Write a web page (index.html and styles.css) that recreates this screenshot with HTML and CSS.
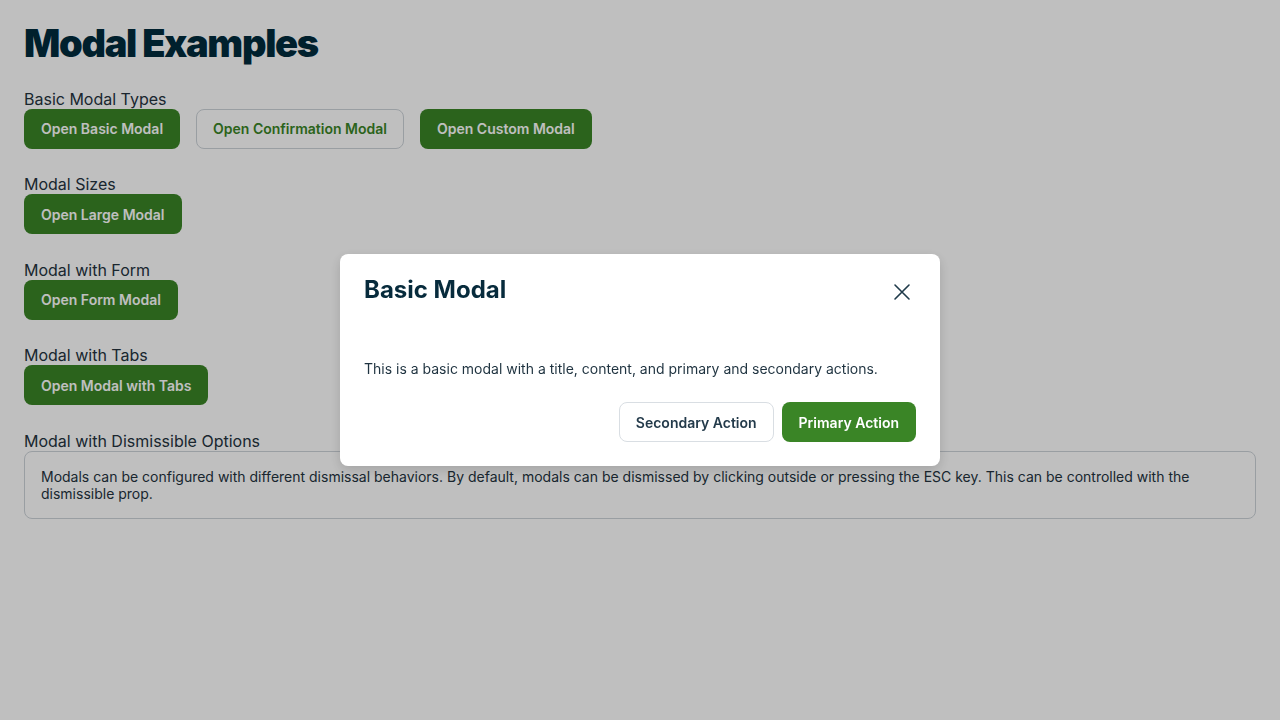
FILE: index.html
```html
<!DOCTYPE html>
<html lang="en">
<head>
<meta charset="utf-8">
<title>Modal Examples</title>
<link rel="stylesheet" href="styles.css">
</head>
<body>
<main class="page">
  <h1 class="page-title">Modal Examples</h1>

  <section class="section">
    <div class="section-label">Basic Modal Types</div>
    <div class="btn-row">
      <button class="btn btn-primary">Open Basic Modal</button>
      <button class="btn btn-outline">Open Confirmation Modal</button>
      <button class="btn btn-primary">Open Custom Modal</button>
    </div>
  </section>

  <section class="section">
    <div class="section-label">Modal Sizes</div>
    <div class="btn-row">
      <button class="btn btn-primary">Open Large Modal</button>
    </div>
  </section>

  <section class="section">
    <div class="section-label">Modal with Form</div>
    <div class="btn-row">
      <button class="btn btn-primary">Open Form Modal</button>
    </div>
  </section>

  <section class="section">
    <div class="section-label">Modal with Tabs</div>
    <div class="btn-row">
      <button class="btn btn-primary">Open Modal with Tabs</button>
    </div>
  </section>

  <section class="section">
    <div class="section-label">Modal with Dismissible Options</div>
    <div class="info-box">Modals can be configured with different dismissal behaviors. By default, modals can be dismissed by clicking outside or pressing the ESC key. This can be controlled with the dismissible prop.</div>
  </section>
</main>

<div class="overlay">
  <div class="modal" role="dialog" aria-labelledby="modal-title">
    <div class="modal-header">
      <h2 class="modal-title" id="modal-title">Basic Modal</h2>
      <button class="modal-close" aria-label="Close">
        <svg width="20" height="20" viewBox="0 0 20 20" fill="none" stroke="currentColor" stroke-width="1.6" stroke-linecap="round"><path d="M3 3L17 17M17 3L3 17"/></svg>
      </button>
    </div>
    <div class="modal-body">This is a basic modal with a title, content, and primary and secondary actions.</div>
    <div class="modal-footer">
      <button class="btn btn-secondary">Secondary Action</button>
      <button class="btn btn-modal-primary">Primary Action</button>
    </div>
  </div>
</div>
</body>
</html>
```

FILE: styles.css
```css
* { box-sizing: border-box; }

html, body {
  margin: 0;
  padding: 0;
  background: #ffffff;
  font-family: Inter, "Noto Sans", "Liberation Sans", sans-serif;
  color: #1f3340;
}

.page {
  padding: 24px;
}

.page-title {
  margin: 0 0 26.6px 0;
  font-size: 38px;
  font-weight: 900;
  letter-spacing: -1.3px;
  line-height: 38px;
  color: #012b3c;
}

.section {
  margin-bottom: 25.6px;
}

.section-label {
  font-size: 16px;
  line-height: normal;
  color: #24333e;
}

.btn-row {
  display: flex;
  gap: 16px;
}

.btn {
  height: 40px;
  padding: 0 16px;
  border-radius: 8px;
  font-family: inherit;
  font-size: 14px;
  font-weight: 600;
  cursor: pointer;
  border: 1px solid transparent;
}

.btn-primary {
  background: #3a8526;
  color: #ffffff;
}

.btn-outline {
  background: transparent;
  border-color: #cdd3d9;
  color: #3a8526;
}

.info-box {
  border: 1px solid #cdd3d9;
  border-radius: 8px;
  padding: 16px;
  font-size: 14px;
  line-height: normal;
  color: #24333e;
}

.overlay {
  position: fixed;
  inset: 0;
  background: rgba(0, 0, 0, 0.25);
  display: flex;
  align-items: center;
  justify-content: center;
}

.modal {
  width: 600px;
  background: #ffffff;
  border-radius: 8px;
  padding: 24px;
  box-shadow: 0 4px 12px rgba(0, 0, 0, 0.15);
}

.modal-header {
  display: flex;
  align-items: flex-start;
  justify-content: space-between;
  margin-bottom: 55px;
}

.modal-title {
  margin: 0;
  font-size: 24px;
  line-height: 24px;
  font-weight: 700;
  color: #072b3c;
}

.modal-close {
  border: none;
  background: transparent;
  padding: 0;
  width: 24px;
  height: 24px;
  margin-top: 2px;
  margin-right: 2px;
  display: flex;
  align-items: center;
  justify-content: center;
  color: #1f3a4a;
  cursor: pointer;
}

.modal-body {
  font-size: 14px;
  line-height: 20px;
  color: #1f3340;
  margin-bottom: 23px;
}

.modal-footer {
  display: flex;
  justify-content: flex-end;
  gap: 8px;
}

.btn-secondary {
  background: #ffffff;
  border-color: #d9dee3;
  color: #233a4a;
}

.btn-modal-primary {
  background: #3a8526;
  color: #ffffff;
}
```
